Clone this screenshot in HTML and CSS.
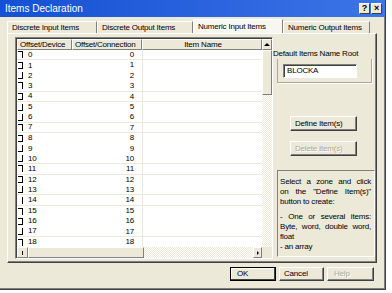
FILE: index.html
```html
<!DOCTYPE html>
<html lang="en">
<head>
  <meta charset="UTF-8" />
  <meta name="viewport" content="width=device-width, initial-scale=1.0"/>
  <title>Items Declaration</title>
  <link rel="stylesheet" href="styles.css">
</head>
<body>
  <div class="window">
    <div class="titlebar">
      <span class="title">Items Declaration</span>
      <div class="title-buttons">
        <span class="tbtn">?</span>
        <span class="tbtn">×</span>
      </div>
    </div>

    <div class="tabs">
      <div class="tab t1">Discrete Input Items</div>
      <div class="tab t2">Discrete Output Items</div>
      <div class="tab t3 active">Numeric Input Items</div>
      <div class="tab t4">Numeric Output Items</div>
    </div>

    <div class="panel">
      <div class="grid">
        <div class="grid-main">
          <div class="grid-table">
            <div class="head">
              <div class="hcell c1">Offset/Device</div>
              <div class="hcell c2">Offset/Connection</div>
              <div class="hcell c3">Item Name</div>
            </div>
            <div class="rows" id="rows"></div>
          </div>
          <div class="vscroll">
            <div class="sbtn up"><span class="arr-up"></span></div>
            <div class="vthumb"></div>
            <div class="track"></div>
          </div>
        </div>
        <div class="hscroll">
          <div class="sbtn left"><span class="arr-left"></span></div>
          <div class="hthumb"></div>
          <div class="track"></div>
          <div class="sbtn right"><span class="arr-right"></span></div>
          <div class="corner"></div>
        </div>
      </div>

      <div class="side">
        <div class="root-label">Default Items Name Root</div>
        <div class="root-frame">
          <div class="textbox">BLOCKA</div>
        </div>
        <div class="btn define">Define Item(s)</div>
        <div class="btn delete disabled">Delete Item(s)</div>
        <div class="info">
          <div class="jl">Select a zone and click</div>
          <div class="jl">on the "Define Item(s)"</div>
          <div>button to create:</div>
          <div class="jl gap">- One or several items:</div>
          <div class="jl">Byte, word, double word,</div>
          <div>float</div>
          <div>- an array</div>
        </div>
      </div>
    </div>

    <div class="buttons">
      <div class="btn ok">OK</div>
      <div class="btn cancel">Cancel</div>
      <div class="btn help disabled">Help</div>
    </div>
  </div>

  <script>
    const marks = ["t","tb","b","t","tb","b","b","t","tb","b","b","t","tb","b","r","t","tb","b","t"];
    const lines = [0, 3, 4, 6, 7, 10, 11, 13, 14, 17];

    function renderRows() {
      const container = document.getElementById("rows");
      marks.forEach((m, i) => {
        const row = document.createElement("div");
        row.className = lines.includes(i) ? "row sep" : "row";
        row.innerHTML = `
          <div class="cell c1"><span class="mark m-${m}"></span>${i}</div>
          <div class="cell c2">${i}</div>
          <div class="cell c3"></div>
        `;
        container.appendChild(row);
      });
    }

    renderRows();
  </script>
</body>
</html>
```

FILE: styles.css
```css
body {
  margin: 0;
  background: #fff;
  font-family: "Liberation Sans", Arial, sans-serif;
  font-size: 8px;
  letter-spacing: -0.2px;
  color: #000;
}
.window {
  width: 386px;
  height: 290px;
  box-sizing: border-box;
  background: #ece9d8;
  border-right: 1px solid #404040;
  border-bottom: 1px solid #404040;
  box-shadow: inset -1px -1px #808080;
  overflow: hidden;
}

/* title bar */
.titlebar {
  height: 17px;
  background: linear-gradient(to right, #1450d2, #3d74e8);
  color: #fff;
  display: flex;
  align-items: center;
  justify-content: space-between;
  padding: 0 3px 0 5px;
}
.title { font-size: 10px; letter-spacing: 0; }
.title-buttons { display: flex; gap: 1px; }
.tbtn {
  width: 11px;
  height: 11px;
  box-sizing: border-box;
  background: #ece9d8;
  color: #000;
  border: 1px solid;
  border-color: #fff #404040 #404040 #fff;
  font-size: 9px;
  line-height: 9px;
  text-align: center;
  font-weight: bold;
}

/* tabs */
.tabs {
  display: flex;
  align-items: flex-end;
  height: 14px;
  margin: 2px 0 0 7px;
}
.tab {
  height: 12px;
  box-sizing: border-box;
  padding-left: 4px;
  line-height: 11px;
  white-space: nowrap;
  border-top: 1px solid #fff;
  border-left: 1px solid #fff;
  border-right: 1px solid #808080;
}
.tab.active {
  height: 14px;
  line-height: 13px;
  background: #f7f6f1;
}
.t1 { width: 90px; }
.t2 { width: 96px; }
.t3 { width: 90px; }
.t4 { width: 87px; }

/* tab panel */
.panel {
  width: 370px;
  height: 230px;
  margin-left: 7px;
  box-sizing: border-box;
  border: 1px solid;
  border-color: #fff #404040 #404040 #fff;
  box-shadow: inset -1px -1px #808080;
  padding: 3px 0 0 7px;
  display: flex;
}

/* grid */
.grid {
  width: 258px;
  height: 222px;
  box-sizing: border-box;
  border: 1px solid;
  border-color: #808080 #fff #fff #808080;
  box-shadow: inset 1px 1px #404040;
  padding: 1px 0 0 1px;
  background: #fff;
  display: flex;
  flex-direction: column;
  flex-shrink: 0;
}
.grid-main {
  display: flex;
  flex: 1;
  min-height: 0;
}
.grid-table {
  width: 245px;
  overflow: hidden;
}
.head {
  display: flex;
  height: 11px;
}
.hcell {
  box-sizing: border-box;
  background: #ece9d8;
  border: 1px solid;
  border-color: #fff #808080 #808080 #fff;
  line-height: 9px;
  padding-left: 2px;
  white-space: nowrap;
  overflow: hidden;
}
.hcell.c3 { text-align: center; }
.c1 { width: 55px; flex-shrink: 0; }
.c2 { width: 70px; flex-shrink: 0; }
.c3 { width: 120px; flex-shrink: 0; }

.row {
  display: flex;
  height: 10.4px;
  box-sizing: border-box;
  line-height: 10px;
}
.row.sep { border-bottom: 1px solid #ece9d8; }
.cell.c1 {
  display: flex;
  align-items: center;
}
.cell.c2 {
  text-align: right;
  padding-right: 8px;
  box-sizing: border-box;
}
.cell.c3 {
  border-left: 1px solid #ece9d8;
  box-sizing: border-box;
}
.mark {
  width: 5px;
  height: 7px;
  margin: 0 5px 0 1px;
  border-right: 1px solid #000;
  box-sizing: border-box;
}
.m-t { border-top: 1px solid #000; }
.m-b { border-bottom: 1px solid #000; }
.m-tb { border-top: 1px solid #000; border-bottom: 1px solid #000; }

/* scrollbars */
.track {
  flex: 1;
  background: repeating-conic-gradient(#fff 0 25%, #ece9d8 0 50%) 0 0 / 2px 2px;
}
.sbtn, .vthumb, .hthumb, .corner {
  box-sizing: border-box;
  background: #ece9d8;
  border: 1px solid;
  border-color: #fff #808080 #808080 #fff;
}
.corner { border: none; width: 10px; }
.vscroll {
  width: 10px;
  display: flex;
  flex-direction: column;
}
.vscroll .sbtn { height: 11px; display: flex; align-items: center; justify-content: center; }
.vthumb { height: 45px; }
.hscroll {
  height: 11px;
  display: flex;
}
.hscroll .sbtn { width: 11px; display: flex; align-items: center; justify-content: center; }
.hthumb { width: 116px; }
.hscroll .right { width: 9px; }
.arr-up {
  border-left: 3px solid transparent;
  border-right: 3px solid transparent;
  border-bottom: 3px solid #000;
}
.arr-left {
  width: 1px;
  height: 4px;
  background: #000;
}
.arr-right {
  border-top: 2px solid transparent;
  border-bottom: 2px solid transparent;
  border-left: 2px solid #000;
}

/* right side */
.side {
  width: 102px;
  display: flex;
  flex-direction: column;
}
.root-label {
  margin-top: 12px;
  line-height: 10px;
  white-space: nowrap;
}
.root-frame {
  width: 95px;
  height: 24px;
  margin-left: 4px;
  box-sizing: border-box;
  border: 1px solid #aca899;
  border-top: none;
  box-shadow: 1px 1px #fff;
  padding: 5px 0 0 5px;
}
.textbox {
  width: 74px;
  height: 14px;
  box-sizing: border-box;
  background: #fff;
  border: 1px solid;
  border-color: #808080 #fff #fff #808080;
  box-shadow: inset 1px 1px #404040;
  line-height: 12px;
  padding-left: 3px;
}
.btn {
  box-sizing: border-box;
  background: #ece9d8;
  border: 1px solid;
  border-color: #fff #404040 #404040 #fff;
  box-shadow: inset -1px -1px #808080;
  padding-left: 4px;
  white-space: nowrap;
}
.btn.disabled {
  color: #aca899;
  text-shadow: 1px 1px #fff;
}
.define, .delete {
  width: 67px;
  height: 15px;
  line-height: 13px;
  margin-left: 17px;
}
.define { margin-top: 33px; }
.delete { margin-top: 10px; }
.info {
  width: 98px;
  height: 87px;
  margin: 14px 0 0 4px;
  box-sizing: border-box;
  border: 1px solid;
  border-color: #808080 #fff #fff #808080;
  padding: 6px 3px 0 2px;
  line-height: 10px;
}
.jl { text-align: justify; text-align-last: justify; }
.gap { margin-top: 5px; }

/* dialog buttons */
.buttons {
  display: flex;
  justify-content: flex-end;
  gap: 3px;
  margin-top: 4px;
  padding-right: 11px;
}
.buttons .btn {
  height: 14px;
  line-height: 12px;
}
.ok {
  width: 46px;
  padding-left: 6px;
  border-color: #000;
  box-shadow: inset -1px -1px #404040, inset 1px 1px #fff;
}
.cancel { width: 45px; }
.help { width: 47px; padding-left: 6px; }
```
